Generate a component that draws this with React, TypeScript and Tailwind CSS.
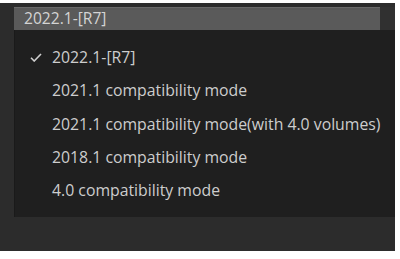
import React from "react";

const options = [
  "2022.1-[R7]",
  "2021.1 compatibility mode",
  "2021.1 compatibility mode(with 4.0 volumes)",
  "2018.1 compatibility mode",
  "4.0 compatibility mode",
];

const App = () => {
  const selected = options[0];

  return (
    <div className="w-[400px] h-[259px] bg-white pt-[3px]" style={{ fontFamily: '"Open Sans", "Noto Sans", sans-serif' }}>
      {/* Frame */}
      <div className="w-[395px] h-[248px] bg-[#2c2c2c] flex flex-col">
        <div className="flex pt-[4px] pl-[14px]">
          <div className="flex-1 flex flex-col">
            {/* Selected value field */}
            <div className="flex">
              <div className="w-[366px] h-[23px] bg-[#5a5a5a] border-t border-[#6a6a6a] flex items-center pl-[10px] text-[15.6px] text-[#d4d4d4] leading-none">
                {selected}
              </div>
              <div className="flex-1 bg-[#303030]" />
            </div>

            {/* Dropdown list */}
            <div className="h-[187px] bg-[#1f1f1f] border-l border-[#1a1a1a] pt-[11px] flex flex-col">
              {options.map((opt) => (
                <div key={opt} className="h-[33.4px] flex items-center text-[15.8px] text-[#cdcdcd]">
                  <span className="w-[37px] flex justify-end pr-[10px]">
                    {opt === selected && (
                      <svg width="12" height="9" viewBox="0 0 12 9" fill="none">
                        <path d="M1 4.8 L4.2 8 L11 1" stroke="#cfcfcf" strokeWidth="1.6" />
                      </svg>
                    )}
                  </span>
                  <span>{opt}</span>
                </div>
              ))}
            </div>
          </div>
        </div>
      </div>
    </div>
  );
};

export default App;
